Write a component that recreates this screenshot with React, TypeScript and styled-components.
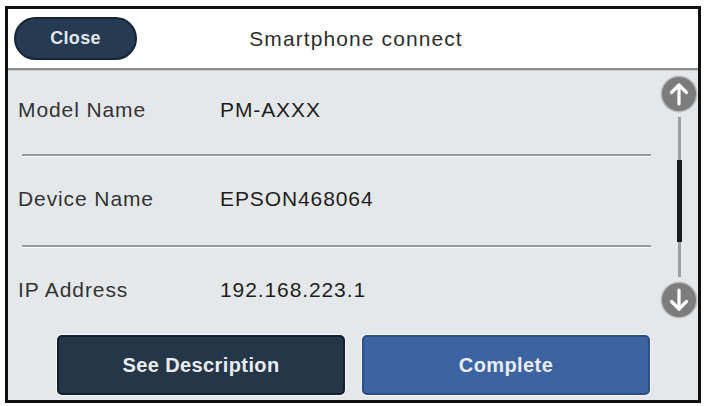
import styled, { createGlobalStyle } from 'styled-components';

const GlobalStyle = createGlobalStyle`
    html, body {
        margin: 0;
        padding: 0;
        background: #ffffff;
    }
    body {
        font-family: "Liberation Sans", Arial, sans-serif;
    }
`;

const rows = [
    { label: 'Model Name', value: 'PM-AXXX', height: 84, shift: 5 },
    { label: 'Device Name', value: 'EPSON468064', height: 89, shift: 3 },
    { label: 'IP Address', value: '192.168.223.1', height: 86, shift: 0 },
];

const ArrowIcon = ({ down }: { down?: boolean }) => (
    <svg width="38" height="38" viewBox="0 0 38 38">
        <circle cx="19" cy="19" r="18.5" fill="#bdbdbd" />
        <circle cx="19" cy="19" r="17" fill="#7c7c7c" />
        <g
            transform={down ? 'rotate(180 19 19)' : undefined}
            stroke="#ffffff"
            strokeWidth="3.2"
            strokeLinecap="round"
            strokeLinejoin="round"
            fill="none"
        >
            <path d="M19 29 V10" />
            <path d="M11.5 17.5 L19 10 L26.5 17.5" />
        </g>
    </svg>
);

export default function App() {
    return (
        <>
            <GlobalStyle />
            <Frame>
                <Header>
                    <CloseButton>Close</CloseButton>
                    <Title>Smartphone connect</Title>
                </Header>
                <Body>
                    <List>
                        {rows.map((r, i) => (
                            <div key={r.label}>
                                {i > 0 && <Separator />}
                                <InfoRow $height={r.height} $shift={r.shift}>
                                    <Label>{r.label}</Label>
                                    <Value>{r.value}</Value>
                                </InfoRow>
                            </div>
                        ))}
                    </List>
                    <ScrollBar>
                        <ArrowIcon />
                        <Track>
                            <Thumb />
                        </Track>
                        <ArrowIcon down />
                    </ScrollBar>
                    <ButtonBar>
                        <ActionButton>See Description</ActionButton>
                        <ActionButton $primary>Complete</ActionButton>
                    </ButtonBar>
                </Body>
            </Frame>
        </>
    );
}

const Frame = styled.div`
    margin: 6px 0 0 5px;
    width: 696px;
    height: 397px;
    box-sizing: border-box;
    border: 3px solid #111111;
    display: flex;
    flex-direction: column;
    overflow: hidden;
`;

const Header = styled.div`
    height: 59px;
    flex-shrink: 0;
    background: #ffffff;
    display: grid;
    grid-template-columns: 1fr auto 1fr;
    align-items: center;
    padding-left: 6px;
    border-bottom: 2px solid #8d8d8d;
    box-shadow: 0 1px 0 #c9ccd0;
    position: relative;
    z-index: 1;
`;

const CloseButton = styled.div`
    justify-self: start;
    width: 123px;
    height: 43px;
    box-sizing: border-box;
    border-radius: 22px;
    background: #263a52;
    border: 2px solid #16243a;
    color: #e3e7ec;
    font-size: 18px;
    font-weight: bold;
    letter-spacing: 0.3px;
    display: flex;
    align-items: center;
    justify-content: center;
`;

const Title = styled.div`
    font-size: 21px;
    letter-spacing: 1.1px;
    color: #2e2e2e;
`;

const Body = styled.div`
    flex: 1;
    background: #e5e8eb;
    display: grid;
    grid-template-columns: 1fr 44px;
    grid-template-rows: auto 1fr;
`;

const List = styled.div`
    display: flex;
    flex-direction: column;
`;

const InfoRow = styled.div<{ $height: number; $shift: number }>`
    height: ${(p) => p.$height}px;
    box-sizing: border-box;
    padding-bottom: ${(p) => p.$shift}px;
    padding-left: 10px;
    display: flex;
    align-items: center;
    font-size: 21px;
    letter-spacing: 0.9px;
`;

const Label = styled.span`
    width: 202px;
    color: #333333;
`;

const Value = styled.span`
    color: #1e1e1e;
`;

const Separator = styled.div`
    height: 2px;
    margin: 0 3px 0 14px;
    background: #979a9d;
    box-shadow: 0 1px 0 #fafbfc;
`;

const ScrollBar = styled.div`
    display: flex;
    flex-direction: column;
    align-items: center;
    padding: 5px 0 14px 6px;
`;

const Track = styled.div`
    flex: 1;
    width: 3px;
    margin: 4px 0;
    background: #9c9ea0;
    display: flex;
    flex-direction: column;
    align-items: center;
`;

const Thumb = styled.div`
    width: 5px;
    height: 82px;
    margin-top: 43px;
    background: #1a1a1a;
    flex-shrink: 0;
`;

const ButtonBar = styled.div`
    grid-column: 1 / -1;
    display: flex;
    gap: 17px;
    padding: 2px 0 5px 49px;
`;

const ActionButton = styled.div<{ $primary?: boolean }>`
    width: 288px;
    height: 60px;
    box-sizing: border-box;
    border-radius: 5px;
    background: ${(p) => (p.$primary ? '#3c63a2' : '#253649')};
    border: 2px solid ${(p) => (p.$primary ? '#2b4f8c' : '#141f2c')};
    box-shadow: 0 0 0 1px #f4f6f8;
    color: #e9edf2;
    font-size: 20px;
    font-weight: bold;
    letter-spacing: 0.4px;
    display: flex;
    align-items: center;
    justify-content: center;
`;
